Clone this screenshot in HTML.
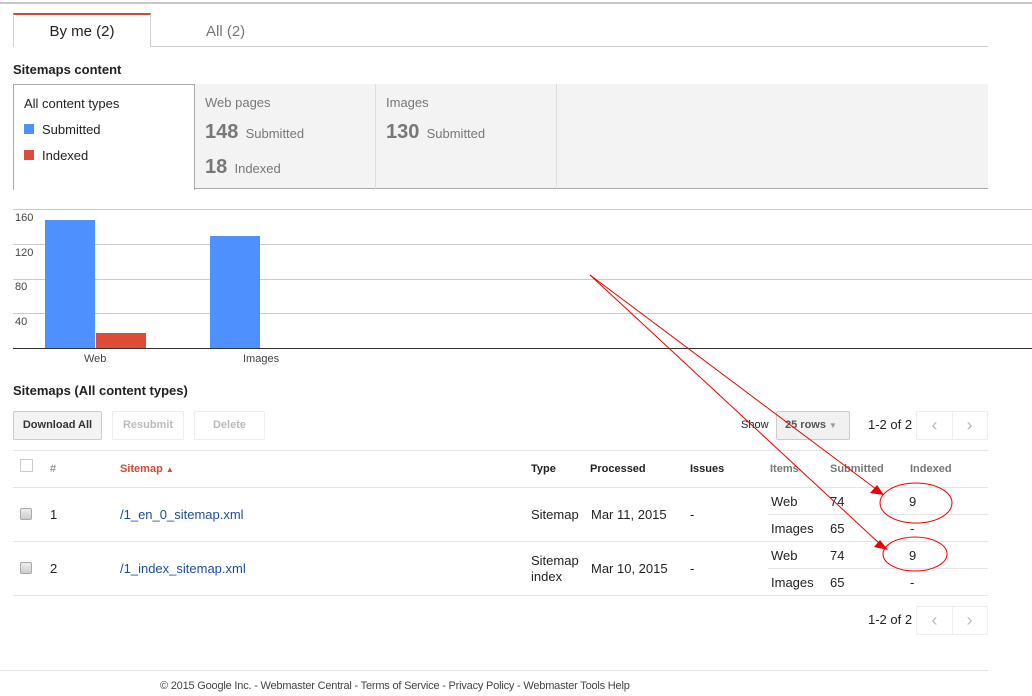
<!DOCTYPE html>
<html><head><meta charset="utf-8"><style>
*{margin:0;padding:0;box-sizing:border-box}
body{width:1032px;height:696px;background:#fff;font-family:"Liberation Sans",Arial,sans-serif;color:#222;position:relative;overflow:hidden;font-size:13px}
.a{position:absolute;white-space:nowrap}
.b{font-weight:bold;font-size:11px}
.g{color:#777}
.hl{position:absolute;height:1px;background:#e5e5e5}
.btn{position:absolute;height:29px;border:1px solid #eee;font-size:11px;font-weight:bold;color:#bbb;text-align:center;line-height:27px;border-radius:2px}
.cb{position:absolute;width:12px;height:12px;border:1px solid #aaa;border-radius:2px;background:linear-gradient(#eee,#ccc)}
</style></head><body>
<div class="hl" style="left:0;top:2px;width:1032px;height:2px;background:#c8c8c8"></div>
<div class="hl" style="left:13px;top:46px;width:975px;background:#d0d0d0"></div>
<div class="a" style="left:13px;top:13px;width:138px;height:34px;border:1px solid #d0d0d0;border-top:2px solid #d14836;border-bottom:none;background:#fff;text-align:center;line-height:34px;font-size:15px;color:#222">By me (2)</div>
<div class="a" style="left:206px;top:23px;font-size:15px;color:#777">All (2)</div>
<div class="a" style="left:13px;top:62px;font-weight:bold;font-size:13px">Sitemaps content</div>
<div class="a" style="left:195px;top:84px;width:793px;height:105px;background:#f3f3f3;border-bottom:1px solid #aaa"></div>
<div class="a" style="left:375px;top:84px;width:1px;height:105px;background:#ddd"></div>
<div class="a" style="left:556px;top:84px;width:1px;height:105px;background:#ddd"></div>
<div class="a" style="left:13px;top:84px;width:182px;height:106px;border:1px solid #aaa;border-bottom:none;background:#fff"></div>
<div class="a" style="left:24px;top:96px">All content types</div>
<div class="a" style="left:24px;top:124px;width:10px;height:10px;background:#4d90fe"></div>
<div class="a" style="left:42px;top:122px">Submitted</div>
<div class="a" style="left:24px;top:150px;width:10px;height:10px;background:#dd4b39"></div>
<div class="a" style="left:42px;top:148px">Indexed</div>
<div class="a g" style="left:205px;top:95px">Web pages</div>
<div class="a g" style="left:205px;top:121px"><b style="font-size:20px">148</b>&nbsp; Submitted</div>
<div class="a g" style="left:205px;top:156px"><b style="font-size:20px">18</b>&nbsp; Indexed</div>
<div class="a g" style="left:386px;top:95px">Images</div>
<div class="a g" style="left:386px;top:121px"><b style="font-size:20px">130</b>&nbsp; Submitted</div>
<div class="hl" style="left:13px;top:209px;width:1019px;background:#ccc"></div>
<div class="hl" style="left:13px;top:244px;width:1019px;background:#ccc"></div>
<div class="hl" style="left:13px;top:279px;width:1019px;background:#ccc"></div>
<div class="hl" style="left:13px;top:313px;width:1019px;background:#ccc"></div>
<div class="a" style="left:45px;top:220px;width:50px;height:128px;background:#4d90fe"></div>
<div class="a" style="left:96px;top:333px;width:50px;height:15px;background:#dd4b39"></div>
<div class="a" style="left:210px;top:236px;width:50px;height:112px;background:#4d90fe"></div>
<div class="hl" style="left:13px;top:348px;width:1019px;background:#333"></div>
<div class="a" style="left:15px;top:212px;font-size:11px;color:#444">160</div>
<div class="a" style="left:15px;top:247px;font-size:11px;color:#444">120</div>
<div class="a" style="left:15px;top:281px;font-size:11px;color:#444">80</div>
<div class="a" style="left:15px;top:316px;font-size:11px;color:#444">40</div>
<div class="a" style="left:84px;top:353px;font-size:11px;color:#444">Web</div>
<div class="a" style="left:243px;top:353px;font-size:11px;color:#444">Images</div>
<div class="a" style="left:13px;top:383px;font-weight:bold">Sitemaps (All content types)</div>
<div class="btn" style="left:13px;top:411px;width:89px;background:#f3f3f3;border-color:#ccc;color:#333">Download All</div>
<div class="btn" style="left:112px;top:411px;width:72px">Resubmit</div>
<div class="btn" style="left:194px;top:411px;width:71px">Delete</div>
<div class="a" style="left:741px;top:419px;font-size:11px">Show</div>
<div class="btn" style="left:776px;top:411px;width:74px;background:#f1f1f1;border-color:#ccc;color:#555;text-align:left;padding-left:8px">25 rows <span style="font-size:8px;color:#999">▼</span></div>
<div class="a" style="left:868px;top:417px">1-2 of 2</div>
<div class="btn" style="left:916px;top:411px;width:72px;color:#bbb;font-size:18px;font-weight:normal;line-height:26px">‹<span style="display:inline-block;width:1px;height:27px;background:#eee;vertical-align:top;margin:0 14px"></span>›</div>
<div class="hl" style="left:13px;top:450px;width:975px"></div>
<div class="a" style="left:20px;top:459px;width:13px;height:13px;border:1px solid #ccc"></div>
<div class="a b g" style="left:50px;top:463px;font-weight:normal">#</div>
<div class="a b" style="left:120px;top:463px;color:#d14836">Sitemap <span style="font-size:8px">▲</span></div>
<div class="a b" style="left:531px;top:463px">Type</div>
<div class="a b" style="left:590px;top:463px">Processed</div>
<div class="a b" style="left:690px;top:463px">Issues</div>
<div class="a b g" style="left:770px;top:463px">Items</div>
<div class="a b g" style="left:830px;top:463px">Submitted</div>
<div class="a b g" style="left:910px;top:463px">Indexed</div>
<div class="hl" style="left:13px;top:487px;width:975px"></div>
<div class="cb" style="left:20px;top:508px"></div>
<div class="a" style="left:50px;top:507px">1</div>
<div class="a" style="left:120px;top:507px;color:#1a4d99">/1_en_0_sitemap.xml</div>
<div class="a" style="left:531px;top:507px">Sitemap</div>
<div class="a" style="left:591px;top:507px">Mar 11, 2015</div>
<div class="a" style="left:690px;top:507px">-</div>
<div class="a" style="left:771px;top:494px">Web</div><div class="a" style="left:830px;top:494px">74</div><div class="a" style="left:909px;top:494px">9</div>
<div class="hl" style="left:768px;top:514px;width:220px"></div>
<div class="a" style="left:771px;top:521px">Images</div><div class="a" style="left:830px;top:521px">65</div><div class="a" style="left:910px;top:521px">-</div>
<div class="hl" style="left:13px;top:541px;width:975px"></div>
<div class="cb" style="left:20px;top:562px"></div>
<div class="a" style="left:50px;top:561px">2</div>
<div class="a" style="left:120px;top:561px;color:#1a4d99">/1_index_sitemap.xml</div>
<div class="a" style="left:531px;top:553px;line-height:16px">Sitemap<br>index</div>
<div class="a" style="left:591px;top:561px">Mar 10, 2015</div>
<div class="a" style="left:690px;top:561px">-</div>
<div class="a" style="left:771px;top:548px">Web</div><div class="a" style="left:830px;top:548px">74</div><div class="a" style="left:909px;top:548px">9</div>
<div class="hl" style="left:768px;top:568px;width:220px"></div>
<div class="a" style="left:771px;top:575px">Images</div><div class="a" style="left:830px;top:575px">65</div><div class="a" style="left:910px;top:575px">-</div>
<div class="hl" style="left:13px;top:595px;width:975px"></div>
<div class="a" style="left:868px;top:612px">1-2 of 2</div>
<div class="btn" style="left:916px;top:606px;width:72px;color:#bbb;font-size:18px;font-weight:normal;line-height:26px">‹<span style="display:inline-block;width:1px;height:27px;background:#eee;vertical-align:top;margin:0 14px"></span>›</div>
<div class="hl" style="left:0;top:670px;width:988px"></div>
<div class="a" style="left:160px;top:680px;font-size:11px;color:#444;letter-spacing:-0.2px">© 2015 Google Inc. - Webmaster Central - Terms of Service - Privacy Policy - Webmaster Tools Help</div>
<svg class="a" style="left:0;top:0" width="1032" height="696">
<g stroke="#e00" fill="none" stroke-width="1">
<line x1="590" y1="275" x2="876" y2="489"/>
<line x1="590" y1="275" x2="880" y2="544"/>
<ellipse cx="916" cy="503" rx="36" ry="20"/>
<ellipse cx="915" cy="554" rx="32" ry="17"/>
</g>
<polygon points="884,495 870,493 877,485" fill="#e00"/>
<polygon points="888,550 874,547 880,540" fill="#e00"/>
</svg>
</body></html>
